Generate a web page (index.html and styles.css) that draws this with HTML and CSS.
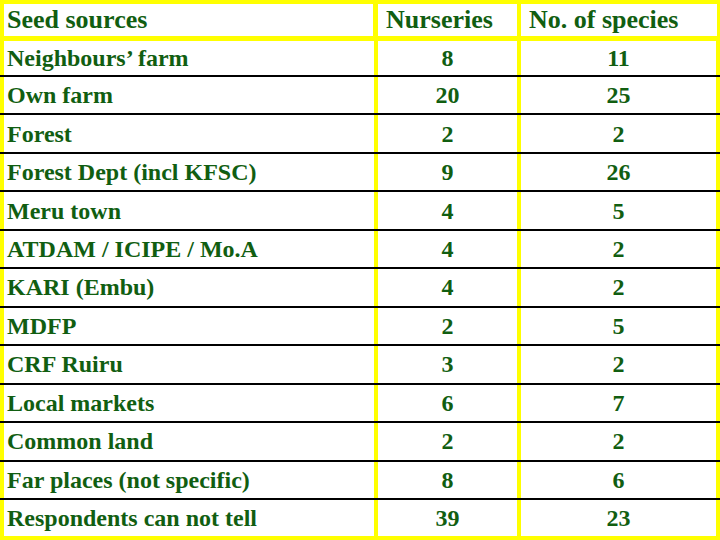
FILE: index.html
```html
<!DOCTYPE html>
<html>
<head>
<meta charset="utf-8">
<link rel="stylesheet" href="styles.css">
</head>
<body>
<div class="sheet">
  <div class="head">
    <div class="hcell first">Seed sources</div>
    <div class="hcell">Nurseries</div>
    <div class="hcell">No. of species</div>
  </div>
  <div class="body">
    <div class="row edge"><div class="cell name">Neighbours’ farm</div><div class="cell num">8</div><div class="cell num">11</div></div>
    <div class="row"><div class="cell name">Own farm</div><div class="cell num">20</div><div class="cell num">25</div></div>
    <div class="row"><div class="cell name">Forest</div><div class="cell num">2</div><div class="cell num">2</div></div>
    <div class="row"><div class="cell name">Forest Dept (incl KFSC)</div><div class="cell num">9</div><div class="cell num">26</div></div>
    <div class="row"><div class="cell name">Meru town</div><div class="cell num">4</div><div class="cell num">5</div></div>
    <div class="row"><div class="cell name">ATDAM / ICIPE / Mo.A</div><div class="cell num">4</div><div class="cell num">2</div></div>
    <div class="row"><div class="cell name">KARI (Embu)</div><div class="cell num">4</div><div class="cell num">2</div></div>
    <div class="row"><div class="cell name">MDFP</div><div class="cell num">2</div><div class="cell num">5</div></div>
    <div class="row"><div class="cell name">CRF Ruiru</div><div class="cell num">3</div><div class="cell num">2</div></div>
    <div class="row"><div class="cell name">Local markets</div><div class="cell num">6</div><div class="cell num">7</div></div>
    <div class="row"><div class="cell name">Common land</div><div class="cell num">2</div><div class="cell num">2</div></div>
    <div class="row"><div class="cell name">Far places (not specific)</div><div class="cell num">8</div><div class="cell num">6</div></div>
    <div class="row edge last"><div class="cell name">Respondents can not tell</div><div class="cell num">39</div><div class="cell num">23</div></div>
  </div>
</div>
</body>
</html>
```
FILE: styles.css
```css
html, body {
  margin: 0;
  padding: 0;
}
body {
  background: #ffff00;
  font-family: "Liberation Serif", serif;
  font-weight: bold;
  color: #115e11;
  font-size: 24px;
}
.sheet {
  width: 720px;
  height: 540px;
  background: #ffff00;
  box-sizing: border-box;
  padding: 4px 0 4px 0;
  display: flex;
  flex-direction: column;
}
.head {
  display: grid;
  grid-template-columns: 369px 139px 195px;
  column-gap: 5px;
  padding: 0 4px;
  height: 32px;
  margin-bottom: 5px;
  font-size: 26px;
}
.head .hcell:nth-child(3) {
  margin-left: -1px;
}
.hcell {
  background: #ffffff;
  display: flex;
  align-items: center;
  padding-left: 8px;
  line-height: 1;
}
.hcell.first {
  padding-left: 3px;
}
.body {
  flex: 1;
  display: flex;
  flex-direction: column;
}
.row {
  flex: 1;
  display: grid;
  grid-template-columns: 370px 139px 195px;
  column-gap: 4px;
  padding: 0 4px 0 4px;
  border-top: 2px solid #000000;
}
.row.edge {
  flex: 0 0 34px;
}
.row:first-child {
  border-top: none;
}
.row.last {
  flex: 0 0 36px;
}
.cell {
  background: #ffffff;
  display: flex;
  align-items: center;
  line-height: 1;
}
.cell.name {
  padding-left: 3px;
}
.cell.num {
  justify-content: center;
}
```
